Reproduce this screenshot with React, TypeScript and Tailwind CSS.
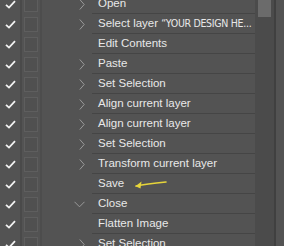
import React from 'react';

type Step = { label: string; quoted?: string; expand?: 'right' | 'down' | null };

const steps: Step[] = [
  { label: 'Open', expand: 'right' },
  { label: 'Select layer ', quoted: '\u201CYOUR DESIGN HE...', expand: 'right' },
  { label: 'Edit Contents' },
  { label: 'Paste', expand: 'right' },
  { label: 'Set Selection', expand: 'right' },
  { label: 'Align current layer', expand: 'right' },
  { label: 'Align current layer', expand: 'right' },
  { label: 'Set Selection', expand: 'right' },
  { label: 'Transform current layer', expand: 'right' },
  { label: 'Save' },
  { label: 'Close', expand: 'down' },
  { label: 'Flatten Image' },
  { label: 'Set Selection', expand: 'right' },
];

function Check() {
  return (
    <svg width="11" height="9" viewBox="0 0 11 9">
      <path d="M1 4.8 L4 7.6 L10 1.2" fill="none" stroke="#f2f2f2" strokeWidth="1.8" />
    </svg>
  );
}

function Chevron({ dir }: { dir: 'right' | 'down' }) {
  if (dir === 'down') {
    return (
      <svg width="11" height="7" viewBox="0 0 11 7">
        <path d="M0.5 0.8 L5.5 5.8 L10.5 0.8" fill="none" stroke="#9a9a9a" strokeWidth="1" />
      </svg>
    );
  }
  return (
    <svg width="6" height="11" viewBox="0 0 6 11">
      <path d="M0.8 0.5 L5.2 5.5 L0.8 10.5" fill="none" stroke="#9a9a9a" strokeWidth="1" />
    </svg>
  );
}

function Arrow() {
  return (
    <svg width="34" height="12" viewBox="0 0 34 12" className="ml-[10px] shrink-0">
      <path d="M2 8 C 12 6, 22 5, 32 4" fill="none" stroke="#e6d43a" strokeWidth="1.6" strokeLinecap="round" />
      <path d="M1.5 8.2 L7.5 3.5 L6.5 10.5 Z" fill="#e6d43a" />
    </svg>
  );
}

export default function App() {
  return (
    <div className="w-[284px] h-[246px] overflow-hidden bg-[#535353] flex" style={{ fontFamily: '"Liberation Sans", Arial, sans-serif' }}>
      <div className="w-[255px] shrink-0 -mt-[6px] flex flex-col">
        {steps.map((s, i) => (
          <div key={i} className="flex h-[20px] shrink-0">
            <div className="w-[20px] shrink-0 flex items-center justify-center">
              <Check />
            </div>
            <div className="w-[2px] shrink-0 bg-[#4a4a4a]" />
            <div className="w-[18px] shrink-0 flex items-center justify-center">
              <div className="w-[14px] h-[15px] border border-[#5e5e5e] bg-[#505050]" />
            </div>
            <div className="w-[2px] shrink-0 bg-[#4d4d4d]" />
            <div className="w-[50px] shrink-0 flex items-center justify-end pr-[7px]">
              {s.expand ? <Chevron dir={s.expand} /> : null}
            </div>
            <div className="flex-1 min-w-0 overflow-hidden flex items-center pl-[6px] border-b border-[#454545] text-[11.5px] text-[#e8e8e8] whitespace-nowrap">
              <span className="whitespace-pre">{s.label}</span>
              {s.quoted ? (
                <span className="font-['Liberation_Sans_Narrow','DejaVu_Sans_Condensed','Liberation_Sans',sans-serif] text-[10.5px] tracking-[-0.3px]">
                  {s.quoted}
                </span>
              ) : null}
              {s.label === 'Save' ? <Arrow /> : null}
            </div>
          </div>
        ))}
      </div>
      <div className="w-[19px] shrink-0 bg-[#4b4b4b] flex justify-center">
        <div className="w-[13px] h-[17px] bg-[#6b6b6b]" />
      </div>
      <div className="w-[2px] shrink-0 bg-[#404040]" />
      <div className="flex-1 bg-[#535353]" />
    </div>
  );
}
